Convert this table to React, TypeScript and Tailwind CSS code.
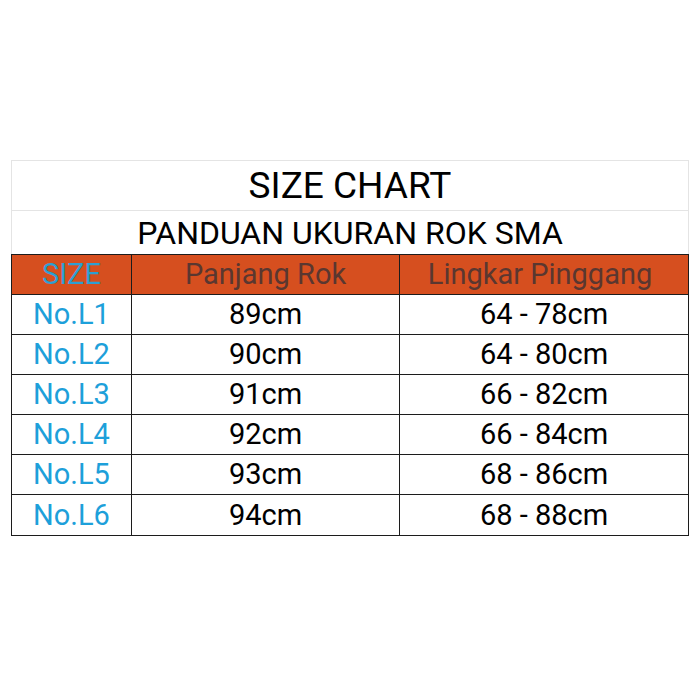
import React from "react";

const rows = [
  ["No.L1", "89cm", "64 - 78cm"],
  ["No.L2", "90cm", "64 - 80cm"],
  ["No.L3", "91cm", "66 - 82cm"],
  ["No.L4", "92cm", "66 - 84cm"],
  ["No.L5", "93cm", "68 - 86cm"],
  ["No.L6", "94cm", "68 - 88cm"],
];

export default function App() {
  return (
    <div
      className="w-[700px] h-[700px] bg-white pt-[160px] pl-[11px]"
      style={{ fontFamily: "Roboto, 'Liberation Sans', sans-serif" }}
    >
      <div className="w-[678px]">
        <div className="border border-[#e4e4e4]">
          <div className="h-[50px] flex items-center justify-center text-[37px] text-black border-b border-[#e4e4e4] leading-none">
            SIZE CHART
          </div>
          <div className="h-[43px] flex items-center justify-center text-[32px] text-black leading-none">
            PANDUAN UKURAN ROK SMA
          </div>
        </div>
        <div className="border border-[#1c1c1c] mt-[-1px]">
          <div className="grid grid-cols-[120px_268px_1fr] h-[40px] bg-[#d64f1f] border-b border-[#1c1c1c] text-[29px] leading-none">
            <div className="flex items-center justify-center border-r border-[#1c1c1c] text-[#2d9fd3]">SIZE</div>
            <div className="flex items-center justify-center border-r border-[#1c1c1c] text-[#5a3730]">Panjang Rok</div>
            <div className="flex items-center justify-center pr-[8px] text-[#5a3730]">Lingkar Pinggang</div>
          </div>
          {rows.map((r, i) => (
            <div
              key={r[0]}
              className={`grid grid-cols-[120px_268px_1fr] h-[40px] text-[29px] leading-none ${i < rows.length - 1 ? "border-b border-[#1c1c1c]" : ""}`}
            >
              <div className="flex items-center justify-center border-r border-[#1c1c1c] text-[#1da0da]">{r[0]}</div>
              <div className="flex items-center justify-center border-r border-[#1c1c1c] text-black">{r[1]}</div>
              <div className="flex items-center justify-center text-black">{r[2]}</div>
            </div>
          ))}
        </div>
      </div>
    </div>
  );
}
